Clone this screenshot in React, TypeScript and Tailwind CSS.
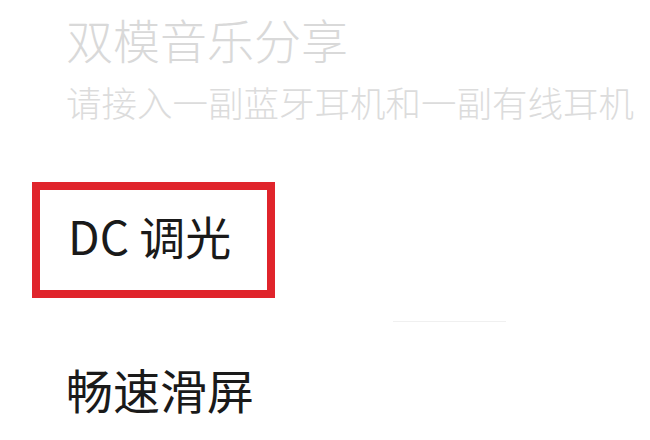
export default function App() {
  return (
    <div
      className="w-[650px] h-[440px] bg-white overflow-hidden"
      style={{ fontFamily: '"Noto Sans CJK SC", "Noto Sans", sans-serif' }}
    >
      {/* disabled item */}
      <div className="pl-[66px] pt-[16px]">
        <div className="text-[47px] leading-[46px] font-light text-[#d9d9d9]">双模音乐分享</div>
        <div className="mt-[22px] text-[35.5px] leading-[35px] font-light text-[#dcdcdc] whitespace-nowrap">
          请接入一副蓝牙耳机和一副有线耳机
        </div>
      </div>

      {/* highlighted item */}
      <div className="ml-[32px] mt-[63px] w-[243px] h-[116px] border-[8px] border-[#e0242b] pl-[28px] pt-[22px]">
        <div className="text-[46px] leading-[46px] text-[#1a1a1a] whitespace-nowrap">DC 调光</div>
      </div>

      <div className="ml-[393px] mt-[23px] w-[113px] h-px bg-[#f0f0f0]" />

      <div className="pl-[66px] mt-[44px] text-[47px] leading-[46px] text-[#1a1a1a]">畅速滑屏</div>
    </div>
  );
}
